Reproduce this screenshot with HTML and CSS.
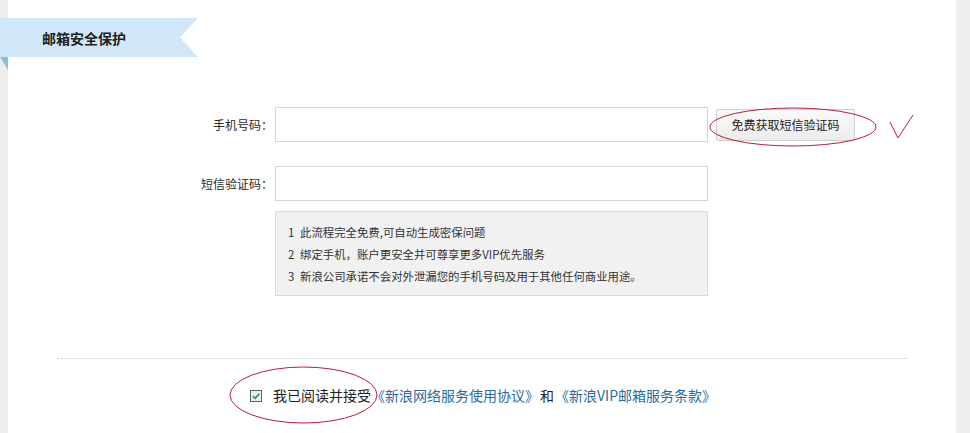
FILE: index.html
```html
<!DOCTYPE html>
<html lang="zh-CN">
<head>
<meta charset="utf-8">
<title>邮箱安全保护</title>
<link rel="stylesheet" href="styles.css">
</head>
<body>
<div class="panel">
  <div class="ribbon"><span class="ribbon-title">邮箱安全保护</span></div>
  <div class="form">
    <div class="row">
      <label class="label">手机号码：</label>
      <input class="input" type="text">
      <button class="btn" type="button">免费获取短信验证码</button>
    </div>
    <div class="row row-second">
      <label class="label">短信验证码：</label>
      <input class="input" type="text">
    </div>
    <div class="row row-info">
      <div class="label"></div>
      <div class="info">
        <p><span class="num">1</span>此流程完全免费,可自动生成密保问题</p>
        <p><span class="num">2</span>绑定手机，账户更安全并可尊享更多VIP优先服务</p>
        <p><span class="num">3</span>新浪公司承诺不会对外泄漏您的手机号码及用于其他任何商业用途。</p>
      </div>
    </div>
  </div>
  <div class="divider"></div>
  <div class="agree">
    <span class="check"><svg width="12" height="12" viewBox="0 0 12 12"><rect x="0.5" y="0.5" width="11" height="11" fill="#e9eef0" stroke="#4f6670"/><path d="M3 6.2 L5.1 8.3 L9.2 3.8" fill="none" stroke="#3a9a3a" stroke-width="1.8"/></svg></span>
    <span class="agree-text">我已阅读并接受</span><a class="link" href="#">《新浪网络服务使用协议》</a><span class="and">和</span><a class="link" href="#">《新浪VIP邮箱服务条款》</a>
  </div>
</div>
<svg class="marks" width="970" height="433" viewBox="0 0 970 433">
  <ellipse cx="793" cy="127" rx="83" ry="19" fill="none" stroke="#b0203a" stroke-width="1"/>
  <path d="M890 122 L898 138 L913 115" fill="none" stroke="#c0203a" stroke-width="1"/>
  <ellipse cx="303.5" cy="395" rx="73.5" ry="28" fill="none" stroke="#b0203a" stroke-width="1"/>
</svg>
</body>
</html>
```
FILE: styles.css
```css
html, body {
  margin: 0;
  padding: 0;
}
body {
  background: #ededed;
  font-family: "Noto Sans CJK SC", "Liberation Sans", sans-serif;
  font-size: 12px;
  color: #333;
  width: 970px;
  height: 433px;
  overflow: hidden;
  position: relative;
}
.panel {
  margin-left: 8px;
  width: 948px;
  height: 433px;
  background: #fff;
  padding-top: 18px;
  box-sizing: border-box;
}
.ribbon {
  position: relative;
  margin-left: -8px;
  width: 198px;
  height: 39px;
  display: flex;
  align-items: center;
}
.ribbon::before {
  content: "";
  position: absolute;
  inset: 0;
  background: #cfe7f8;
  clip-path: polygon(0 0, 198px 0, 180px 19.5px, 198px 39px, 0 39px);
}
.ribbon::after {
  content: "";
  position: absolute;
  left: 0;
  top: 39px;
  width: 8px;
  height: 13px;
  background: #8dbde2;
  clip-path: polygon(0 0, 8px 0, 8px 13px);
}
.ribbon-title {
  position: relative;
  margin-left: 42px;
  font-size: 14px;
  font-weight: bold;
  color: #222;
  line-height: 20px;
}
.form {
  margin-top: 50px;
}
.row {
  display: flex;
  align-items: center;
}
.row-second {
  margin-top: 24px;
}
.row-info {
  margin-top: 10px;
  align-items: flex-start;
}
.label {
  width: 267px;
  flex: none;
  box-sizing: border-box;
  padding-right: 2px;
  text-align: right;
  font-size: 12px;
  color: #2a2a2a;
}
.input {
  width: 433px;
  height: 35px;
  box-sizing: border-box;
  border: 1px solid #d6d6d6;
  margin: 0;
  padding: 0 6px;
  background: #fff;
}
.btn {
  margin-left: 8px;
  width: 139px;
  height: 32px;
  box-sizing: border-box;
  border: 1px solid #cfcfcf;
  border-radius: 2px;
  background: linear-gradient(#fafafa, #ececec);
  font-family: "Noto Sans CJK SC", sans-serif;
  font-size: 12px;
  color: #222;
  padding: 0;
}
.info {
  width: 433px;
  height: 85px;
  box-sizing: border-box;
  background: #f1f1f1;
  border: 1px solid #dcdcdc;
  padding: 9px 0 0 12px;
}
.info p {
  margin: 0;
  line-height: 22px;
  font-size: 11.4px;
  color: #333;
}
.num {
  display: inline-block;
  width: 12px;
}
.divider {
  margin: 62px 49px 0;
  border-top: 1px dotted #c8c8c8;
}
.agree {
  margin-top: 26px;
  text-align: center;
  font-size: 14px;
  line-height: 20px;
  color: #222;
  padding-left: 2px;
}
.check {
  display: inline-block;
  vertical-align: -1px;
  width: 12px;
  height: 12px;
  margin-right: 8px;
}
.check svg {
  display: block;
}
.link {
  color: #2a6b9c;
  text-decoration: none;
}
.and {
  margin: 0 1px;
}
.marks {
  position: absolute;
  left: 0;
  top: 0;
  pointer-events: none;
}
```
